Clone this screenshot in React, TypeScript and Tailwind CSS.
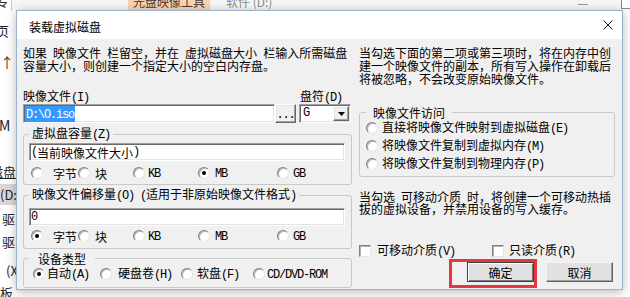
import React from 'react';

// half-width latin text, SimSun-like 6px advance
const L = ({ children }: { children: React.ReactNode }) => (
  <span className="font-['Liberation_Mono',monospace] text-[12px] tracking-[-1.2px]">{children}</span>
);

const Radio = ({ on }: { on?: boolean }) => (
  <span className="flex h-[12px] w-[12px] shrink-0 items-center justify-center rounded-full border border-t-[#808080] border-l-[#808080] border-r-[#e6e6e6] border-b-[#e6e6e6] bg-white shadow-[inset_1px_1px_0_#b4b4b4]">
    {on && <span className="h-[4px] w-[4px] rounded-full bg-black" />}
  </span>
);

const Opt = ({
  on,
  className = '',
  gap,
  children,
}: {
  on?: boolean;
  className?: string;
  gap: string;
  children: React.ReactNode;
}) => (
  <div className={`flex items-center ${className}`}>
    <Radio on={on} />
    <span className={`whitespace-nowrap ${gap}`}>{children}</span>
  </div>
);

const Check = () => (
  <span className="h-[12px] w-[12px] shrink-0 border border-t-[#808080] border-l-[#808080] border-r-[#e6e6e6] border-b-[#e6e6e6] bg-white shadow-[inset_1px_1px_0_#b4b4b4]" />
);

const sunken =
  'border border-t-[#a0a0a0] border-l-[#a0a0a0] border-r-white border-b-white bg-white shadow-[inset_1px_1px_0_#696969,inset_-1px_-1px_0_#e3e3e3]';
const raised =
  'border border-t-white border-l-white border-r-[#696969] border-b-[#696969] bg-[#f0f0f0] shadow-[inset_-1px_-1px_0_#a0a0a0,inset_1px_1px_0_#e3e3e3]';

const UnitRow = ({ sel }: { sel: number }) => (
  <div className="ml-[2px] flex h-[14px] items-center">
    <Opt on={sel === 0} className="w-[47px]" gap="ml-[4px]">
      {'\u2002'}字节
    </Opt>
    <Opt on={sel === 1} className="w-[55px]" gap="ml-[5px]">
      块
    </Opt>
    <Opt on={sel === 2} className="w-[65px]" gap="ml-[3px]">
      <L>KB</L>
    </Opt>
    <Opt on={sel === 3} className="w-[79px]" gap="ml-[5px]">
      <L>MB</L>
    </Opt>
    <Opt on={sel === 4} gap="ml-[4px]">
      <L>GB</L>
    </Opt>
  </div>
);

export default function App() {
  return (
    <div className="relative h-[297px] w-[630px] overflow-hidden bg-white font-['Noto_Sans_CJK_SC',sans-serif] text-[12px] leading-[13px] text-black">
      {/* explorer window behind */}
      <div className="absolute left-[12px] top-0 h-[10px] w-[618px] bg-[#f6f6f6]" />
      <div className="absolute left-[11px] top-0 h-[11px] w-px bg-[#c9c9c9]" />
      <div className="absolute left-[-4px] top-[-6px] text-[13px] leading-[14px] text-[#333]">专</div>
      <div className="absolute left-[128px] top-0 h-[11px] w-[82px] bg-[#f8d4b4]" />
      <div className="absolute left-[133px] top-[-5px] leading-[14px] text-[#4a3a2a]">光盘映像工具</div>
      <div className="absolute left-[226px] top-[-5px] leading-[14px] text-[#8a8a8a]">软件 (D:)</div>
      <div className="absolute left-[578px] top-[4px] h-px w-[10px] bg-[#9a9a9a]" />
      <div className="absolute left-[621px] top-[-3px] h-[12px] w-[12px] border border-[#8a8a8a] bg-white" />

      <div className="absolute left-[-4px] top-[24px] text-[13px] leading-[14px] text-[#222]">页</div>
      <div className="absolute left-0 top-[54px] text-[14px] leading-[16px] text-[#444]">↑</div>
      <div className="absolute left-[-1px] top-[117px] text-[14px] leading-[16px] text-[#222]">M</div>
      <div className="absolute left-[-10px] top-[165px] text-[13px] leading-[14px] text-[#222] underline">磁盘</div>
      <div className="absolute left-0 top-[184px] h-[21px] w-[16px] bg-[#d9d9d9]" />
      <div className="absolute left-0 top-[188px] text-[13px] leading-[14px] text-[#222]">(D:</div>
      <div className="absolute left-[2px] top-[212px] text-[13px] leading-[14px] text-[#222]">驱</div>
      <div className="absolute left-[2px] top-[235px] text-[13px] leading-[14px] text-[#222]">驱</div>
      <div className="absolute left-[6px] top-[264px] text-[13px] leading-[14px] text-[#222]">(X</div>
      <div className="absolute left-0 top-[286px] text-[13px] leading-[14px] text-[#222]">板</div>

      {/* dialog */}
      <div className="absolute left-[16px] top-[10px] flex h-[280px] w-[607px] flex-col border border-[#9db3cb] bg-[#f0f0f0] shadow-[0_2px_10px_rgba(0,0,0,0.28)]">
        <div className="flex h-[28px] shrink-0 items-center justify-between bg-white pl-[12px] pr-[9px] pt-[3px]">
          <span>装载虚拟磁盘</span>
          <svg width="10" height="10" viewBox="0 0 10 10" className="mb-[3px]">
            <path d="M0.5 0.5 L9.5 9.5 M9.5 0.5 L0.5 9.5" stroke="#111" strokeWidth="1" />
          </svg>
        </div>

        <div className="flex gap-[7px] pl-[6px] pt-[7px]">
          {/* left column */}
          <div className="flex w-[329px] flex-col">
            <p className="whitespace-nowrap">
              如果{'\u2002'}映像文件{'\u2002'}栏留空，并在{'\u2002'}虚拟磁盘大小{'\u2002'}栏输入所需磁盘
              <br />
              容量大小，则创建一个指定大小的空白内存盘。
            </p>

            <div className="mt-[17px] flex">
              <div className="flex w-[276px] flex-col">
                <div className="h-[13px]">
                  映像文件<L>(I)</L>
                </div>
                <div className="mt-[2px] flex h-[19px]">
                  <div className={`flex w-[252px] items-center pl-[1px] ${sunken}`}>
                    <span className="bg-[#3399ff] px-px leading-[14px] text-white">
                      <L>D:\O.iso</L>
                    </span>
                  </div>
                  <div className={`flex w-[21px] items-end justify-center pb-[1px] leading-[12px] ${raised}`}>
                    <L>...</L>
                  </div>
                </div>
              </div>
              <div className="flex w-[53px] flex-col">
                <div className="h-[13px] pl-[1px]">
                  盘符<L>(D)</L>
                </div>
                <div className={`mt-[2px] flex h-[19px] w-[52px] items-center justify-between pl-[3px] pr-[1px] ${sunken}`}>
                  <L>G</L>
                  <div className={`flex h-[15px] w-[16px] items-center justify-center ${raised}`}>
                    <svg width="7" height="4" viewBox="0 0 7 4">
                      <path d="M0 0 H7 L3.5 4 Z" fill="#000" />
                    </svg>
                  </div>
                </div>
              </div>
            </div>

            <fieldset className="mt-[3px] rounded-[3px] border border-[#c8c8c8] pb-[4px] pl-[5px] pr-[6px]">
              <legend className="px-[3px] leading-[13px]">
                虚拟盘容量<L>(Z)</L>
              </legend>
              <div className={`mt-px flex h-[18px] items-center pl-px ${sunken}`}>
                <L>(</L>当前映像文件大小<L>)</L>
              </div>
              <div className="mt-[5px]">
                <UnitRow sel={3} />
              </div>
            </fieldset>

            <fieldset className="mt-[2px] rounded-[3px] border border-[#c8c8c8] pb-[5px] pl-[5px] pr-[6px]">
              <legend className="px-[3px] leading-[13px]">
                映像文件偏移量<L>(O) (</L>适用于非原始映像文件格式<L>)</L>
              </legend>
              <div className={`mt-[5px] flex h-[18px] items-center pl-px ${sunken}`}>
                <L>0</L>
              </div>
              <div className="mt-[3px]">
                <UnitRow sel={0} />
              </div>
            </fieldset>

            <fieldset className="mt-[3px] rounded-[3px] border border-[#c8c8c8] pb-[6px] pl-[5px] pr-[6px]">
              <legend className="px-[3px] leading-[13px]">{'\u2002'}设备类型{'\u2002'}</legend>
              <div className="ml-[4px] mt-[2px] flex h-[14px] items-center">
                <Opt on className="w-[67px]" gap="ml-[2px]">
                  自动<L>(A)</L>
                </Opt>
                <Opt className="w-[81px]" gap="ml-[6px]">
                  硬盘卷<L>(H)</L>
                </Opt>
                <Opt className="w-[72px]" gap="ml-[4px]">
                  软盘<L>(F)</L>
                </Opt>
                <Opt gap="ml-[2px]">
                  <L>CD/DVD-ROM</L>
                </Opt>
              </div>
            </fieldset>
          </div>

          {/* right column */}
          <div className="flex w-[256px] flex-col">
            <p className="whitespace-nowrap">
              当勾选下面的第二项或第三项时，将在内存中创
              <br />
              建一个映像文件的副本，所有写入操作在卸载后
              <br />
              将被忽略，不会改变原始映像文件。
            </p>

            <fieldset className="mt-[21px] rounded-[3px] border border-[#c8c8c8] pb-[3px] pl-[6px] pr-[6px]">
              <legend className="px-px leading-[13px]">{'\u2002'}映像文件访问{'\u2002'}</legend>
              <div className="flex h-[18px] items-center">
                <Opt gap="ml-[4px]">
                  直接将映像文件映射到虚拟磁盘<L>(E)</L>
                </Opt>
              </div>
              <div className="flex h-[18px] items-center">
                <Opt gap="ml-[4px]">
                  将映像文件复制到虚拟内存<L>(M)</L>
                </Opt>
              </div>
              <div className="flex h-[18px] items-center">
                <Opt gap="ml-[4px]">
                  将映像文件复制到物理内存<L>(P)</L>
                </Opt>
              </div>
            </fieldset>

            <p className="mt-[14px] whitespace-nowrap leading-[12px]">
              当勾选{'\u2002'}可移动介质{'\u2002'}时，将创建一个可移动热插
              <br />
              拔的虚拟设备，并禁用设备的写入缓存。
            </p>

            <div className="mt-[29px] flex h-[13px] items-center">
              <div className="flex w-[133px] items-center">
                <Check />
                <span className="ml-[6px]">
                  可移动介质<L>(V)</L>
                </span>
              </div>
              <div className="flex items-center">
                <Check />
                <span className="ml-[5px]">
                  只读介质<L>(R)</L>
                </span>
              </div>
            </div>

            <div className="mr-[2px] mt-[5px] flex justify-end gap-[12px]">
              <button className="flex h-[20px] w-[67px] items-center justify-center border border-[#404040] bg-[#e1e1e1] shadow-[inset_1px_1px_0_#fff,inset_-1px_-1px_0_#7a7a7a]">
                确定
              </button>
              <button className="flex h-[20px] w-[67px] items-center justify-center border border-t-[#f4f4f4] border-l-[#f4f4f4] border-r-[#606060] border-b-[#606060] bg-[#e1e1e1] shadow-[inset_-1px_-1px_0_#a0a0a0]">
                取消
              </button>
            </div>
          </div>
        </div>
      </div>

      {/* red annotation box */}
      <div className="absolute left-[449px] top-[259px] h-[29px] w-[88px] border-[3px] border-[#e4393c]" />
    </div>
  );
}
